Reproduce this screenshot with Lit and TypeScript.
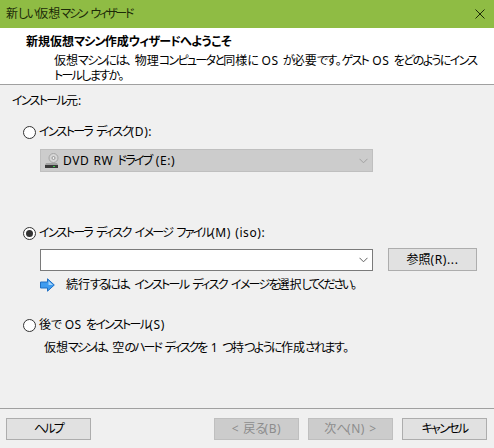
import { LitElement, html, css, svg } from "lit";
import { customElement } from "lit/decorators.js";

const chevron = svg`<svg class="chev" width="9" height="6" viewBox="0 0 9 6"><path d="M.5 .8 L4.5 4.8 L8.5 .8" fill="none" stroke="currentColor" stroke-width="1"/></svg>`;

/* Split a string into kana / latin / other runs so each run can carry its own tracking. */
function t(text: string) {
  const parts = text.split(/([\u30A0-\u30FF]+|[\u3040-\u309F]+|[A-Za-z0-9():.<>]+|、)/).filter((p) => p);
  return parts.map((p) => {
    const c = p.charCodeAt(0);
    if (p === "、") return html`<span class="p">${p}</span>`;
    if (c >= 0x30a0 && c <= 0x30ff) return html`<span class="k">${p}</span>`;
    if (c >= 0x3040 && c <= 0x309f) return html`<span class="h">${p}</span>`;
    if (c < 0x80 && c !== 0x20) return html`<span class="l">${p}</span>`;
    return html`<span>${p}</span>`;
  });
}

@customElement("app-root")
export class AppRoot extends LitElement {
  static styles = css`
    :host {
      display: flex;
      flex-direction: column;
      width: 494px;
      height: 448px;
      background: #f0f0f0;
      color: #000;
      font: 12px/16px "Noto Sans", "Noto Sans CJK JP", sans-serif;
      font-feature-settings: "palt";
      word-spacing: 1px;
      overflow: hidden;
    }
    * { box-sizing: border-box; }
    .k { letter-spacing: -1.7px; }
    .h { letter-spacing: -1.6px; }
    .l { letter-spacing: 0.6px; }
    .p { margin-right: 2px; }
    .titlebar {
      height: 28px;
      flex: none;
      background: #8fbc44;
      display: flex;
      align-items: center;
      justify-content: space-between;
      padding: 0 9px 0 6px;
      color: #1c2a08;
    }
    .titlebar .k { letter-spacing: -2.2px; }
    .header {
      height: 57px;
      flex: none;
      background: #fff;
      border-bottom: 1px solid #a0a0a0;
      padding: 6px 0 0 26px;
    }
    .header b { display: block; font-weight: 700; }
    .header b .k { letter-spacing: -0.8px; }
    .header b .h { letter-spacing: -0.4px; }
    .desc { margin: 3px 0 0 28px; }
    .desc div { height: 15px; line-height: 12px; padding-top: 2px; white-space: pre; }
    .desc span { display: inline-block; }
    .desc .p { margin-right: 3px; }
    .body {
      flex: 1;
      display: flex;
      flex-direction: column;
      padding: 8px 0 0 12px;
    }
    .radio {
      display: flex;
      align-items: center;
      gap: 3px;
      height: 16px;
      margin-left: 11px;
    }
    .radio .dot {
      width: 13px;
      height: 13px;
      border-radius: 50%;
      border: 1px solid #333;
      background: #fff;
      display: flex;
      align-items: center;
      justify-content: center;
      flex: none;
    }
    .radio .dot i { width: 7px; height: 7px; border-radius: 50%; background: #333; display: block; }
    .r1 { margin-top: 15px; }
    .r2 { margin-top: 53px; }
    .r3 { margin-top: 24px; }
    .combo {
      width: 333px;
      margin-left: 28px;
      display: flex;
      align-items: center;
      justify-content: space-between;
      padding: 0 4px 0 3px;
    }
    .combo.off {
      height: 23px;
      margin-top: 9px;
      background: #cccccc;
      border: 1px solid #bfbfbf;
    }
    .combo.off .chev { color: #a0a0a0; }
    .combo.on {
      height: 22px;
      background: #fff;
      border: 1px solid #7a7a7a;
    }
    .combo.on .chev { color: #606060; }
    .drive { display: flex; align-items: center; gap: 4px; }
    .pick { display: flex; align-items: flex-end; gap: 15px; margin-top: 7px; }
    .btn {
      width: 85px;
      height: 22px;
      flex: none;
      display: flex;
      align-items: center;
      justify-content: center;
      white-space: pre;
      background: #e1e1e1;
      border: 1px solid #adadad;
    }
    .btn.browse { width: 89px; height: 23px; }
    .btn.off { background: #cccccc; border-color: #bfbfbf; color: #8c8c8c; }
    .hint { display: flex; align-items: center; gap: 11px; margin: 6px 0 0 28px; height: 16px; }
    .hint .h { letter-spacing: -2.2px; }
    .note { margin: 7px 0 0 32px; }
    .note .k { letter-spacing: -2.2px; }
    .footer {
      height: 40px;
      flex: none;
      border-top: 1px solid #a0a0a0;
      display: flex;
      align-items: flex-start;
      gap: 9px;
      padding: 9px 7px 0 6px;
    }
    .spacer { flex: 1; }
  `;

  render() {
    return html`
      <div class="titlebar">
        <span>${t("新しい仮想マシン ウィザード")}</span>
        <svg width="10" height="10" viewBox="0 0 10 10"><path d="M.5.5l9 9M9.5.5l-9 9" stroke="#1c2a08" stroke-width="1" fill="none"/></svg>
      </div>
      <div class="header">
        <b>${t("新規仮想マシン作成ウィザードへようこそ")}</b>
        <div class="desc">
          <div>${t("仮想マシンには、物理コンピュータと同様に OS が必要です。ゲスト OS をどのようにインス")}</div>
          <div>${t("トールしますか。")}</div>
        </div>
      </div>
      <div class="body">
        <div>${t("インストール元:")}</div>
        <div class="radio r1"><span class="dot"></span><span>${t("インストーラ ディスク(D):")}</span></div>
        <div class="combo off">
          <span class="drive">
            <svg width="15" height="15" viewBox="0 0 15 15">
              <circle cx="9.5" cy="5" r="4.5" fill="#d6d6d6" stroke="#a4a4a4"/>
              <circle cx="9.5" cy="5" r="1.5" fill="#f2f2f2" stroke="#969696"/>
              <path d="M2 10 H13 L14 12 H1 Z" fill="#a2a2a2"/>
              <rect x="1" y="12" width="13" height="3" fill="#3a3a3a"/>
              <rect x="9" y="13" width="2" height="1" fill="#3fd14a"/>
            </svg>
            <span>${t("DVD RW ドライブ (E:)")}</span>
          </span>
          ${chevron}
        </div>
        <div class="radio r2"><span class="dot"><i></i></span><span>${t("インストーラ ディスク イメージ ファイル(M) (iso):")}</span></div>
        <div class="pick">
          <div class="combo on"><span></span>${chevron}</div>
          <div class="btn browse">${t("参照(R)...")}</div>
        </div>
        <div class="hint">
          <svg width="15" height="14" viewBox="0 0 15 14">
            <path d="M.5 4H7.5V.8L14.3 7 7.5 13.2V10H.5Z" fill="#3f9cf0" stroke="#1f6fc4"/>
            <path d="M8.5 3 L13 7 L8.5 7Z" fill="#a6d4fa"/>
          </svg>
          <span>${t("続行するには、インストール ディスク イメージを選択してください。")}</span>
        </div>
        <div class="radio r3"><span class="dot"></span><span>${t("後で OS をインストール(S)")}</span></div>
        <div class="note">${t("仮想マシンは、空のハード ディスクを 1 つ持つように作成されます。")}</div>
      </div>
      <div class="footer">
        <div class="btn">${t("ヘルプ")}</div>
        <div class="spacer"></div>
        <div class="btn off">${t("< 戻る(B)")}</div>
        <div class="btn off">${t("次へ(N) >")}</div>
        <div class="btn">${t("キャンセル")}</div>
      </div>
    `;
  }
}
